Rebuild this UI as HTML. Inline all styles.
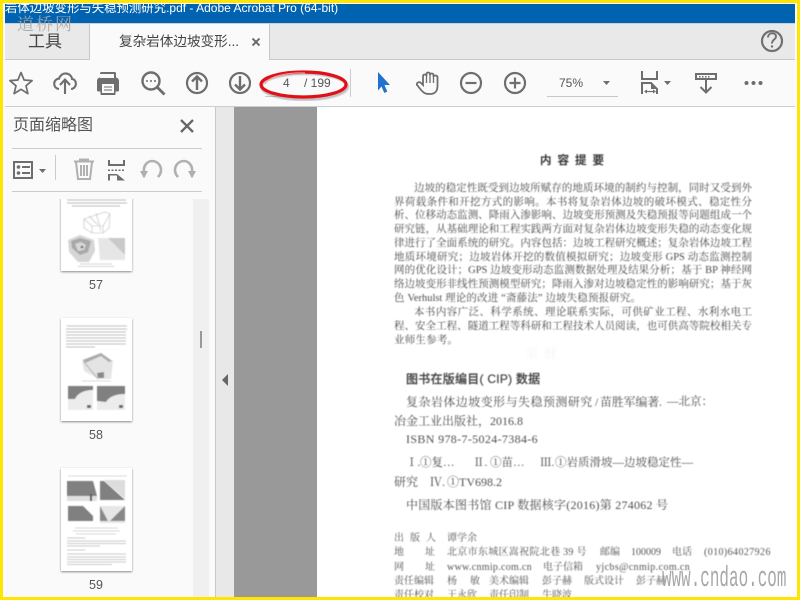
<!DOCTYPE html>
<html lang="zh"><head><meta charset="utf-8"><title>Acrobat</title>
<style>
html,body{margin:0;padding:0;width:800px;height:600px;overflow:hidden;background:#fff}
body{position:relative;font-family:"Liberation Sans","Noto Sans CJK SC",sans-serif}
.a{position:absolute}
.t{position:absolute;white-space:nowrap;line-height:1}
.doc{position:absolute;left:0;top:0;width:800px;height:600px;filter:blur(.45px);color:#4a4a4a;font-family:"Liberation Serif","Noto Serif CJK SC",serif}
.j{position:absolute;left:394px;width:358px;font-size:10.48px;line-height:14px;height:14px;text-align:justify;text-align-last:justify;overflow:hidden}
.ind{left:414px;width:338px}
.s{position:absolute;white-space:nowrap;font-size:12px;line-height:14px;color:#505050}
.m{position:absolute;white-space:nowrap;font-size:10px;line-height:12px;color:#555}
</style></head><body>
<!-- chrome -->
<div class="a" style="left:5px;top:4px;width:790px;height:19px;background:#0063b1;overflow:hidden">
<div class="t" style="left:0;top:-3px;font-size:12.4px;line-height:14px;color:#fff">岩体边坡变形与失稳预测研究<span style="font-size:12px">.pdf - Adobe Acrobat Pro (64-bit)</span></div>
</div>
<div class="a" style="left:5px;top:23px;width:790px;height:36px;background:#e9e9e9;border-top:1px solid #cfcfcf;box-sizing:border-box"></div>
<div class="a" style="left:5px;top:59px;width:790px;height:1px;background:#c8c8c8"></div>
<div class="a" style="left:89px;top:24px;width:1px;height:36px;background:#c8c8c8"></div>
<div class="a" style="left:90px;top:24px;width:179px;height:36px;background:#fafafa;border-right:1px solid #c8c8c8"></div>
<div class="t" style="left:28px;top:33px;font-size:17px;color:#444">工具</div>
<div class="t" style="left:119px;top:35px;font-size:13.6px;color:#444">复杂岩体边坡变形...</div>
<div class="a" style="left:5px;top:60px;width:790px;height:46px;background:#fafafa"></div>
<div class="a" style="left:5px;top:106px;width:790px;height:1px;background:#cdcdcd"></div>
<!-- sidebar -->
<div class="a" style="left:5px;top:107px;width:210px;height:490px;background:#fafafa"></div>
<div class="a" style="left:215px;top:107px;width:1px;height:490px;background:#c8c8c8"></div>
<div class="a" style="left:216px;top:107px;width:18px;height:490px;background:#e8e8e8"></div>
<div class="a" style="left:234px;top:107px;width:83px;height:490px;background:#999"></div>
<div class="a" style="left:317px;top:107px;width:478px;height:490px;background:#fff"></div>
<div class="a" style="left:193px;top:199px;width:16px;height:398px;background:#f0f0f0"></div>
<div class="a" style="left:200px;top:331px;width:2px;height:17px;background:#999"></div>
<div class="t" style="left:13px;top:118px;font-size:16px;color:#555">页面缩略图</div>
<div class="a" style="left:12px;top:148px;width:190px;height:1px;background:#ccc"></div>
<div class="a" style="left:55px;top:155px;width:1px;height:30px;background:#ccc"></div>
<div class="t" style="left:89px;top:279px;font-size:12.5px;color:#555">57</div>
<div class="t" style="left:89px;top:429px;font-size:12.5px;color:#555">58</div>
<div class="t" style="left:89px;top:579px;font-size:12.5px;color:#555">59</div>
<!-- thumbnails and icons -->
<svg class="a" style="left:0;top:0" width="800" height="600" viewBox="0 0 800 600">
<defs><filter id="b" x="-5%" y="-5%" width="110%" height="110%"><feGaussianBlur stdDeviation=".65"/></filter>
<filter id="sh" x="-20%" y="-20%" width="140%" height="140%"><feDropShadow dx="0" dy="1" stdDeviation="1" flood-color="#000" flood-opacity=".45"/></filter></defs>
<rect x="61" y="190" width="71" height="81" fill="#fff" filter="url(#sh)"/>
<rect x="61" y="318" width="71" height="103" fill="#fff" filter="url(#sh)"/>
<rect x="61" y="468" width="71" height="103" fill="#fff" filter="url(#sh)"/>
<rect x="5" y="180" width="188" height="19" fill="#fafafa"/>
<rect x="12" y="191" width="190" height="1" fill="#ccc"/>
<g filter="url(#b)">
<!-- 57 -->
<g stroke="#bbb" stroke-width=".9"><path d="M67 200H126M67 203H127M72 206H120"/></g>
<path d="M84 219l21-7 5 2-1 14-6 5H92l-8-5zM84 219l8 7h11l7-12M92 226v7M103 226v7M89 216l9 9M96 213l5 18" fill="none" stroke="#bdbdbd" stroke-width=".6"/>
<path d="M68 240l12-5 14 5 1 11-6 11H78l-9-10z" fill="#d5d5d5"/>
<path d="M71 241l9-3 11 3-3 11-8 3-8-7z" fill="#a8a8a8"/><path d="M75 244l6-2 5 3-2 5-6 1z" fill="#d8d8d8"/><circle cx="82" cy="247" r="1.300" fill="#666"/>
<path d="M98 238h27v22H100z" fill="#e6e6e6"/><path d="M108 238h17v17z" fill="#c9c9c9"/>
<path d="M80 264H112M78 266.500H114" stroke="#ccc" stroke-width=".7"/>
<!-- 58 -->
<g stroke="#c0c0c0" stroke-width=".9"><path d="M67 326H127M66 329H127M66 332H126M66 335H126M66 338H126M66 341H126M66 344H126M66 347H95"/></g>
<path d="M82 360l19-7 12 8-2 18H99l-15-8z" fill="#e4e4e4"/><path d="M83 360l18-7 11 8-3 1-8-6-16 7z" fill="#aaa"/>
<path d="M84 362l14 17" stroke="#b5b5b5" fill="none"/><path d="M97 373l7-1v6h-6z" fill="#888"/>
<path d="M82 381H111" stroke="#ccc" stroke-width=".8"/>
<rect x="68" y="386" width="25" height="24" fill="#ececec"/><path d="M68 386h25v4c-10 0-16 4-18 9H68z" fill="#808080"/>
<rect x="97" y="386" width="28" height="24" fill="#ececec"/><path d="M97 386h28v8c-10 0-16 3-19 8l-9-1z" fill="#808080"/>
<rect x="87" y="405" width="4" height="3" fill="#666"/><rect x="119" y="405" width="4" height="3" fill="#666"/>
<!-- 59 -->
<path d="M68 476H127" stroke="#ccc" stroke-width=".7"/>
<path d="M67 481h26l4 15H67z" fill="#808080"/><rect x="67" y="496" width="30" height="5" fill="#e0e0e0"/><rect x="90" y="494" width="2" height="7" fill="#555"/>
<path d="M100 481h4l21 19H100z" fill="#808080"/><path d="M104 480h21v19z" fill="#ddd"/>
<path d="M68 506h15l10 10v5H68z" fill="#808080"/>
<path d="M100 506h25v17h-25z" fill="#e6e6e6"/><path d="M100 506l8 15h-8zM125 506l-15 15h15z" fill="#888"/>
<g stroke="#ccc" stroke-width=".8"><path d="M75 528H118M73 531H120M76 534H116"/></g>
<g stroke="#bbb" stroke-width=".8"><path d="M67 538H85M67 541H126M67 543.500H126M67 546H100M67 550H85M67 554H126M67 557H126M67 559.500H126M67 562H126M67 564.500H112"/></g>
</g>
<!-- collapse arrow -->
<path d="M228 374v12l-6-6z" fill="#666"/>
<!-- toolbar icons -->
<g fill="none" stroke="#6e6e6e" stroke-width="2">
<path d="M21 72.500l3.100 7.500 8 .6-6.100 5.200 1.900 7.800L21 89.300l-6.900 4.300 1.900-7.800-6.100-5.200 8-.6z" stroke-width="1.700" stroke-linejoin="round"/>
<path d="M59 89c-3.500-.5-4.800-3-4.800-5.300 0-3 2.300-5 4.800-5 1-3.300 3.700-5.300 6.500-5.300 3.700 0 6.200 2.800 6.500 5.500 2.500.3 3.900 2.500 3.900 4.800 0 2.500-1.800 5-4.800 5.300M65 94V80M60 85l5-5.500 5 5.500" stroke-width="2.100"/>
<circle cx="151" cy="81" r="8.500" stroke-width="2.400"/><path d="M157 87l7.500 7.500" stroke-width="2.800"/>
<circle cx="197" cy="83" r="10" stroke-width="2.200"/><path d="M197 90V77M192 81.500l5-5 5 5" stroke-width="2.400"/>
<circle cx="240" cy="83" r="10" stroke-width="2.200"/><path d="M240 76v13M235 84.500l5 5 5-5" stroke-width="2.400"/>
<path d="M424.500 93C421 91 419 87 417 85C416 83 419 81 421 83L423 85V76C423 74 426.500 74 426.500 76V74C426.500 72 430 72 430 74V75C430 73 433.500 73 433.500 75V77C433.500 75 437.500 75 437.500 77V86C437.500 91 435 94 430 94C428 94 426 94 424.500 93Z" stroke-width="1.800"/>
<path d="M426.500 76v7M430 75v8M433.500 77v6" stroke-width="1.300"/>
<circle cx="471" cy="83" r="10" stroke-width="2.200"/><path d="M465.500 83h11" stroke-width="2.200"/>
<circle cx="515" cy="83" r="10" stroke-width="2.200"/><path d="M509.500 83h11M515 77.500v11" stroke-width="2.200"/>
<circle cx="772" cy="41" r="10" stroke="#707070" stroke-width="2.200"/>
<!-- fit width -->
<path d="M642 71v8h15v-8" stroke-width="2"/><path d="M642 94V83h9l6 6v5" stroke-width="2"/>
<path d="M646 91.500h8" stroke-width="1.200"/>
</g>
<g fill="#6e6e6e">
<path d="M97 81c0-2 1.500-3.500 3-3.500v-4c0-1 .5-1.500 1.500-1.500h13c1 0 1.500.5 1.500 1.500v4c1.500 0 3 1.500 3 3.500v9c0 1-.5 1.500-1.500 1.500h-2V94c0 .8-.5 1-1 1h-13c-.5 0-1-.2-1-1v-2.500h-2c-1 0-1.500-.5-1.500-1.500z"/>
<rect x="100" y="74" width="14" height="4" fill="#fafafa"/><rect x="102" y="84" width="12" height="9" fill="#fafafa"/>
<path d="M104 86.500h8v1h-8zM104 89.500h8v1h-8z"/>
<circle cx="147" cy="81" r="1"/><circle cx="151" cy="81" r="1"/><circle cx="155" cy="81" r="1"/>
<circle cx="746.500" cy="83" r="2"/><circle cx="753.500" cy="83" r="2"/><circle cx="760.500" cy="83" r="2"/>
<path d="M603 81h7l-3.500 4z"/><path d="M664 81h7l-3.500 4z"/><path d="M39 169h7l-3.500 4z"/>
<path d="M651 83l7 6h-7z"/>
<path d="M647 89.500v4l-3-2zM653 89.500v4l3-2z"/>
<!-- keyboard -->
<path d="M695 73h22v7h-22zM697 75v3h18v-3z" fill-rule="evenodd"/>
<path d="M699 76h1.500v1.500H699zM702 76h1.500v1.500H702zM705 76h1.500v1.500H705zM708 76h1.500v1.500H708z"/>
<!-- list -->
<path d="M13 161h20v18H13zM15 163v14h16v-14z" fill-rule="evenodd"/>
<circle cx="18.500" cy="167" r="1.800"/><circle cx="18.500" cy="173" r="1.800"/><path d="M22 166h8v2h-8zM22 172h8v2h-8z"/>
<!-- fit2 -->
<path d="M108 160h2v4h13v-4h2v6h-17zM108 169.500h2v1.500h-2zM111.500 169.500h2v1.500h-2zM115 169.500h2v1.500h-2zM118.500 169.500h2v1.500h-2zM122 169.500h2v1.500h-2z"/>
<path d="M108 174h9l8 6.500h-8v-5h-7v5h-2z"/>
</g>
<path d="M768 37.500c0-5.500 8-5.500 8-1 0 3-4 3-4 7" fill="none" stroke="#707070" stroke-width="1.900"/><circle cx="772" cy="46.500" r="1.200" fill="#707070"/>
<path d="M252.500 38.500l7 7M259.500 38.500l-7 7" stroke="#666" stroke-width="1.900"/>
<path d="M378 72l12 13-5.500 0 2.800 6.500-3 1.500-2.800-6.500-3.500 4z" fill="#1f73cf"/>
<path d="M706 80v12M700.500 87l5.500 5.500 5.500-5.500" fill="none" stroke="#6e6e6e" stroke-width="2"/>
<path d="M181 120l12 12M193 120l-12 12" stroke="#666" stroke-width="2.300"/>
<!-- trash etc -->
<g fill="none" stroke="#b0b0b0" stroke-width="2">
<path d="M74 161.500h20M80 161.500v-2h8v2M76 162l2 17h12l2-17M81 165v11M84 165v11M87 165v11"/>
<path d="M144 172C143 165 148 161 152 161C157 161 161 165 161 170C161 173 160 175 158 177" stroke-width="2.600"/>
<path d="M192 172C193 165 188 161 184 161C179 161 175 165 175 170C175 173 176 175 178 177" stroke-width="2.600"/>
</g>
<path d="M140 171h8l-4 7.500zM188 171h8l-4 7.500z" fill="#b0b0b0"/>
<!-- dividers -->
<rect x="350" y="69" width="1" height="28" fill="#ccc"/>
<rect x="547" y="96" width="71" height="1" fill="#c8c8c8"/>
<rect x="265" y="96" width="35" height="1" fill="#c8c8c8"/>
<!-- red oval -->
<ellipse cx="304.500" cy="86.500" rx="43" ry="13" fill="none" stroke="#555" stroke-width="3" opacity=".35" filter="url(#b)"/>
<ellipse cx="303.500" cy="84.500" rx="42.500" ry="12.500" fill="none" stroke="#e01019" stroke-width="3.200"/>
<path d="M265 84C268 76 290 72 305 73" stroke="#f6a0a0" stroke-width="1" fill="none"/>
</svg>
<div class="t" style="left:283px;top:77px;font-size:12px;color:#555">4</div>
<div class="t" style="left:304px;top:77px;font-size:12px;color:#555">/ 199</div>
<div class="t" style="left:559px;top:77px;font-size:12px;color:#555">75%</div>
<!-- document -->
<div class="doc">
<div class="t" style="left:540px;top:156px;font-size:11.500px;letter-spacing:6px;font-weight:500;color:#333;-webkit-text-stroke:.25px #333;font-family:'Liberation Sans','Noto Sans CJK SC',sans-serif">内容提要</div>
<div class="j ind" style="top:182px">边坡的稳定性既受到边坡所赋存的地质环境的制约与控制&#xFF0C;同时又受到外</div>
<div class="j" style="top:196px">界荷载条件和开挖方式的影响。本书将复杂岩体边坡的破坏模式、稳定性分</div>
<div class="j" style="top:209px">析、位移动态监测、降雨入渗影响、边坡变形预测及失稳预报等问题组成一个</div>
<div class="j" style="top:223px">研究链&#xFF0C;从基础理论和工程实践两方面对复杂岩体边坡变形失稳的动态变化规</div>
<div class="j" style="top:237px">律进行了全面系统的研究。内容包括&#xFF1A;边坡工程研究概述&#xFF1B;复杂岩体边坡工程</div>
<div class="j" style="top:251px">地质环境研究&#xFF1B;边坡岩体开挖的数值模拟研究&#xFF1B;边坡变形 GPS 动态监测控制</div>
<div class="j" style="top:264px">网的优化设计&#xFF1B;GPS 边坡变形动态监测数据处理及结果分析&#xFF1B;基于 BP 神经网</div>
<div class="j" style="top:278px">络边坡变形非线性预测模型研究&#xFF1B;降雨入渗对边坡稳定性的影响研究&#xFF1B;基于灰</div>
<div class="j" style="top:292px;width:247px">色 Verhulst 理论的改进 &#x201C;斋藤法&#x201D; 边坡失稳预报研究。</div>
<div class="j ind" style="top:306px">本书内容广泛、科学系统、理论联系实际&#xFF0C;可供矿业工程、水利水电工</div>
<div class="j" style="top:320px">程、安全工程、隧道工程等科研和工程技术人员阅读&#xFF0C;也可供高等院校相关专</div>
<div class="j" style="top:334px;width:64px">业师生参考。</div>
<div class="t" style="left:525px;top:347px;font-size:13px;letter-spacing:6px;color:#f5f5f5">荣健</div>
<div class="s" style="left:406px;top:372px;font-weight:500;-webkit-text-stroke:.2px #444;font-family:'Liberation Sans','Noto Sans CJK SC',sans-serif;color:#444;font-size:12px;letter-spacing:.25px">图书在版编目( CIP) 数据</div>
<div class="s" style="left:406px;top:395px;letter-spacing:.45px">复杂岩体边坡变形与失稳预测研究</div>
<div class="s" style="left:595px;top:395px">/</div>
<div class="s" style="left:600px;top:395px;letter-spacing:-.2px">苗胜军编著.</div>
<div class="s" style="left:667px;top:395px;font-size:11.500px">—北京&#xFF1A;</div>
<div class="s" style="left:394px;top:414px">冶金工业出版社&#xFF0C;2016.8</div>
<div class="s" style="left:406px;top:432px;letter-spacing:.35px">ISBN 978-7-5024-7384-6</div>
<div class="s" style="left:406px;top:456px;font-size:11.500px">Ⅰ.</div>
<div class="s" style="left:420px;top:456px;font-size:11.500px">①复…</div>
<div class="s" style="left:473px;top:456px;font-size:11.500px">Ⅱ.</div>
<div class="s" style="left:490px;top:456px;font-size:11.500px">①苗…</div>
<div class="s" style="left:540px;top:456px;font-size:11.500px">Ⅲ.</div>
<div class="s" style="left:555px;top:456px;font-size:11.500px">①岩质滑坡—边坡稳定性—</div>
<div class="s" style="left:394px;top:475px">研究</div>
<div class="s" style="left:430px;top:475px">Ⅳ.</div>
<div class="s" style="left:447px;top:475px">①TV698.2</div>
<div class="s" style="left:406px;top:498px;letter-spacing:.25px">中国版本图书馆 CIP 数据核字(2016)第 274062 号</div>
<div class="m" style="left:394px;top:533px;letter-spacing:6px">出版人</div>
<div class="m" style="left:447px;top:533px">谭学余</div>
<div class="m" style="left:394px;top:547px">地</div><div class="m" style="left:425px;top:547px">址</div>
<div class="m" style="left:447px;top:547px;letter-spacing:.3px">北京市东城区嵩祝院北巷 39 号</div>
<div class="m" style="left:600px;top:547px">邮编</div>
<div class="m" style="left:631px;top:547px">100009</div>
<div class="m" style="left:672px;top:547px">电话</div>
<div class="m" style="left:704px;top:547px;letter-spacing:.4px">(010)64027926</div>
<div class="m" style="left:394px;top:562px">网</div><div class="m" style="left:425px;top:562px">址</div>
<div class="m" style="left:447px;top:562px;letter-spacing:.3px">www.cnmip.com.cn</div>
<div class="m" style="left:543px;top:562px">电子信箱</div>
<div class="m" style="left:596px;top:562px;letter-spacing:.4px">yjcbs@cnmip.com.cn</div>
<div class="m" style="left:394px;top:576px">责任编辑</div>
<div class="m" style="left:447px;top:576px">杨</div>
<div class="m" style="left:470px;top:576px">敏</div>
<div class="m" style="left:489px;top:576px">美术编辑</div>
<div class="m" style="left:542px;top:576px">彭子赫</div>
<div class="m" style="left:584px;top:576px">版式设计</div>
<div class="m" style="left:636px;top:576px">彭子赫</div>
<div class="m" style="left:394px;top:590px">责任校对</div>
<div class="m" style="left:447px;top:590px">王永欣</div>
<div class="m" style="left:489px;top:590px">责任印制</div>
<div class="m" style="left:542px;top:590px">牛晓波</div>
</div>
<!-- watermarks -->
<div class="t" style="left:662px;top:564px;font-size:29px;font-family:'Liberation Mono',monospace;color:#9a9a9a;transform-origin:0 0;transform:scaleX(.55);opacity:.85">www.cndao.com</div>
<div class="t" style="left:17px;top:14px;font-size:17px;letter-spacing:2px;color:#a8a8a8;opacity:.9;font-family:'Noto Serif CJK SC',serif">道桥网</div>
<!-- yellow frame -->
<div class="a" style="left:0;top:0;width:800px;height:3px;background:#ffe600"></div>
<div class="a" style="left:0;top:597px;width:800px;height:3px;background:#ffe600"></div>
<div class="a" style="left:0;top:0;width:3px;height:600px;background:#ffe600"></div>
<div class="a" style="left:797px;top:0;width:3px;height:600px;background:#ffe600"></div>
</body></html>
